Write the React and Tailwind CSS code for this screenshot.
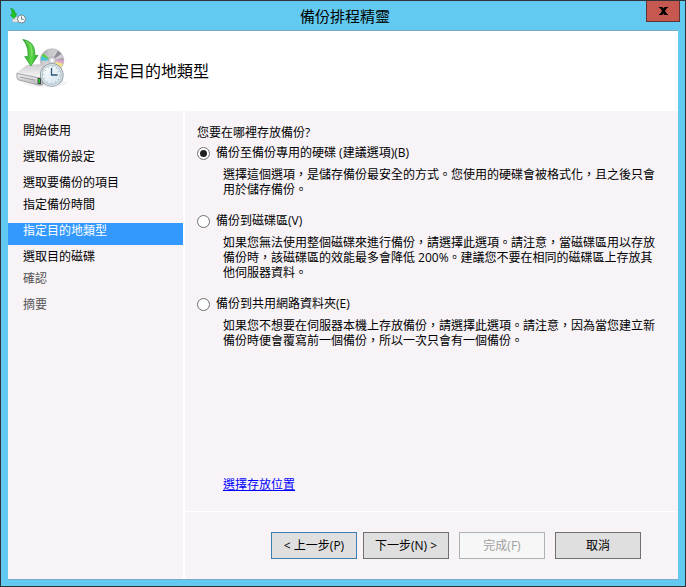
import React, { useState } from "react";

const STEPS = [
  { label: "開始使用", spacing: "mb-1" },
  { label: "選取備份設定", spacing: "mb-1" },
  { label: "選取要備份的項目", spacing: "" },
  { label: "指定備份時間", spacing: "mb-1" },
  { label: "指定目的地類型", spacing: "mb-1", current: true },
  { label: "選取目的磁碟", spacing: "" },
  { label: "確認", spacing: "mb-1", pending: true },
  { label: "摘要", spacing: "", pending: true },
];

const OPTIONS = [
  {
    id: "dedicated",
    label: "備份至備份專用的硬碟 (建議選項)(B)",
    text: "選擇這個選項，是儲存備份最安全的方式。您使用的硬碟會被格式化，且之後只會用於儲存備份。",
  },
  {
    id: "volume",
    label: "備份到磁碟區(V)",
    text: "如果您無法使用整個磁碟來進行備份，請選擇此選項。請注意，當磁碟區用以存放備份時，該磁碟區的效能最多會降低 200%。建議您不要在相同的磁碟區上存放其他伺服器資料。",
  },
  {
    id: "share",
    label: "備份到共用網路資料夾(E)",
    text: "如果您不想要在伺服器本機上存放備份，請選擇此選項。請注意，因為當您建立新備份時便會覆寫前一個備份，所以一次只會有一個備份。",
  },
];

function SmallBackupIcon() {
  return (
    <svg width="16" height="16" viewBox="0 0 16 16" aria-hidden="true">
      <path d="M2.500 10.500 4.500 9h5v5h-7z" fill="#f2f2f4" stroke="#a5a5ad" strokeWidth=".6" />
      <path d="M2.500 11.500h6" stroke="#c4c4ca" strokeWidth=".7" />
      <path d="M.6.2C3.800 1 5.300 3.200 5.300 6l1.400-.2-2.500 5L.3 7l1.500-.2C2.300 4.500 1.900 2.200.6.2z" fill="#1fc41f" stroke="#159a22" strokeWidth=".6" />
      <circle cx="11.500" cy="11" r="4" fill="#fbfdfd" stroke="#77838b" strokeWidth="1" />
      <path d="M11.500 8.500v2.800h2.300" fill="none" stroke="#3a5a70" strokeWidth=".8" />
    </svg>
  );
}

function BackupIcon() {
  return (
    <svg width="54" height="50" viewBox="0 0 54 50" aria-hidden="true">
      <defs>
        <linearGradient id="arrow" x1="0" y1="0" x2="1" y2="0">
          <stop offset="0" stopColor="#1f9a25" />
          <stop offset=".55" stopColor="#5fd84a" />
          <stop offset="1" stopColor="#2aa52c" />
        </linearGradient>
        <linearGradient id="top" x1="0" y1="0" x2="0" y2="1">
          <stop offset="0" stopColor="#cfcfd3" />
          <stop offset="1" stopColor="#fafafa" />
        </linearGradient>
        <linearGradient id="front" x1="0" y1="0" x2="0" y2="1">
          <stop offset="0" stopColor="#f6f6f7" />
          <stop offset="1" stopColor="#b2b2b6" />
        </linearGradient>
        <linearGradient id="disc" x1="0" y1="0" x2="1" y2="1">
          <stop offset="0" stopColor="#a2a2a6" />
          <stop offset=".5" stopColor="#dadade" />
          <stop offset="1" stopColor="#a0a0a5" />
        </linearGradient>
        <linearGradient id="face" x1="0" y1="0" x2="1" y2="1">
          <stop offset="0" stopColor="#ffffff" />
          <stop offset="1" stopColor="#cfe2ec" />
        </linearGradient>
      </defs>
      <ellipse cx="30" cy="45" rx="22" ry="4" fill="#f3f3f5" />
      {/* disc */}
      <circle cx="37" cy="22.500" r="11.800" fill="url(#disc)" stroke="#b0b0b4" strokeWidth=".6" />
      <path d="M37 22.500 32 12.200l5-1.300 3 .5z" fill="#c9c9cd" />
      <path d="m37 22.500 6-10 3.500 3.400z" fill="#8f8f95" />
      <path d="M37 22.500 26.500 18l-.8 4.500z" fill="#43c4dc" />
      <path d="M37 22.500 28.300 15.500 26.500 18z" fill="#58cf42" />
      <path d="M37 22.500 48.300 20l.3 2.500z" fill="#b892b0" />
      <path d="M37 22.500 48 25.500l-1.800 4.500z" fill="#f2e28a" />
      <path d="m37 22.500 11.600.5-.6 2.500z" fill="#e3a3cd" />
      <circle cx="37" cy="22.500" r="3.600" fill="#d9d9dd" stroke="#a6a6ab" strokeWidth=".6" />
      <circle cx="37" cy="22.500" r="1.400" fill="#ffffff" />
      {/* drive */}
      <path d="M1.800 35.500 12 27.200l16-.7 3 9.500-6 4.500z" fill="url(#top)" stroke="#bcbcc0" strokeWidth=".5" />
      <path d="M1.800 35.500 25 40l3-2v8.500l-3.500.8L3.200 41.800Q1.500 41 1.800 35.500z" fill="url(#front)" stroke="#85858a" strokeWidth=".7" />
      <path d="m4.500 38.600 15.500 3.200v1L5 39.600z" fill="#9a9aa0" />
      <path d="m22.600 40.200 3.400-.4v6.400l-3.400-.5z" fill="#3c443c" />
      <path d="M23.400 41h1.600v4h-1.600z" fill="#20c521" />
      {/* arrow */}
      <path d="M7.800 1.500c8.600 1.300 12.600 7 12 16l3.200-.3-7.100 10.800-6.200-9.500 3.200.2C13.700 12 11.600 5.800 7.800 1.500z" fill="url(#arrow)" stroke="#249a26" strokeWidth=".7" />
      <path d="M10.600 3.200c4.800 2.400 6.900 7.500 6.300 14.500" fill="none" stroke="#a4ee86" strokeWidth="1.200" opacity=".6" />
      {/* clock */}
      <circle cx="36.800" cy="37" r="11.800" fill="#8b99a2" />
      <circle cx="36.800" cy="37" r="10.900" fill="#dfe6ea" />
      <circle cx="36.800" cy="37" r="9.500" fill="url(#face)" stroke="#9fb3bf" strokeWidth=".7" />
      <circle cx="36.800" cy="37" r="8" fill="none" stroke="#7f9aab" strokeWidth="1" strokeDasharray=".8 3.389" />
      <path d="M36.500 30v7H42.500" fill="none" stroke="#2c5577" strokeWidth="1.300" />
    </svg>
  );
}

function WizardButton({ children, className = "border-[#707070]", ...props }) {
  return (
    <button
      type="button"
      className={`w-[86px] h-[27px] border bg-[#dfdfdf] text-center leading-4 disabled:border-[#adb2b5] disabled:bg-[#f7f7f7] disabled:text-[#a0a0a0] ${className}`}
      {...props}
    >
      {children}
    </button>
  );
}

export default function App() {
  const [selected, setSelected] = useState("dedicated");

  return (
    <div
      lang="zh-Hant"
      className="min-h-screen flex flex-col border border-[#303338] bg-[#62caf0] text-black text-xs font-['Open_Sans','Noto_Sans_CJK_TC',sans-serif]"
    >
      <header className="h-[29px] shrink-0 grid grid-cols-[1fr_auto_1fr] items-center pl-[9px] pr-[5px]">
        <SmallBackupIcon />
        <h1 className="text-[15px] leading-5">備份排程精靈</h1>
        <button
          type="button"
          aria-label="關閉"
          className="justify-self-end self-start w-[34px] h-[21px] flex items-center justify-center border border-t-0 border-[#5f3437] bg-[#c75850]"
        >
          <svg width="9" height="8" viewBox="0 0 9 8" aria-hidden="true">
            <path d="M0 0h3.500l1 1.500L5.500 0H9v1H8L6 4l2 3h1v1H5.500l-1-1.500-1 1.500H0V7h1l2-3-2-3H0z" fill="#000" />
          </svg>
        </button>
      </header>

      <div className="flex-1 flex flex-col mx-[7px] mb-1.5 border-y border-[#7aabca] bg-[#f7f3f7]">
        <div className="h-20 shrink-0 flex items-center gap-7 pl-[7px] bg-white">
          <div className="self-start pt-[7px]">
            <BackupIcon />
          </div>
          <h2 className="text-base leading-5">指定目的地類型</h2>
        </div>

        <div className="flex-1 flex">
          <nav className="w-[177px] shrink-0 border-r-2 border-white pt-3">
            <ol>
              {STEPS.map((step) => (
                <li
                  key={step.label}
                  aria-current={step.current ? "step" : undefined}
                  className={`h-[22px] pl-[15px] leading-4 ${step.spacing} ${
                    step.current
                      ? "bg-[#3399ff] text-white"
                      : step.pending
                        ? "text-[#555555]"
                        : ""
                  }`}
                >
                  {step.label}
                </li>
              ))}
            </ol>
          </nav>

          <main className="flex-1 min-w-0 flex flex-col">
            <div className="flex-1 flex flex-col pt-3.5 pl-3 pr-5 pb-[18px]">
              <fieldset>
                <legend className="leading-4 mb-1">您要在哪裡存放備份?</legend>
                <div className="flex flex-col gap-4">
                  {OPTIONS.map((option) => (
                    <div key={option.id}>
                      <label className="flex items-center gap-1.5 leading-4">
                        <input
                          type="radio"
                          name="destination"
                          value={option.id}
                          checked={selected === option.id}
                          onChange={() => setSelected(option.id)}
                          className="appearance-none grid place-content-center size-[13px] shrink-0 rounded-full border border-[#707070] bg-white checked:before:block checked:before:size-[7px] checked:before:rounded-full checked:before:bg-[#212121]"
                        />
                        {option.label}
                      </label>
                      <p className="mt-1.5 ml-[26px] leading-[15px]">{option.text}</p>
                    </div>
                  ))}
                </div>
              </fieldset>

              <a
                href="#location"
                className="mt-auto ml-[26px] self-start leading-4 text-[#0000ff] underline"
              >
                選擇存放位置
              </a>
            </div>

            <footer className="flex justify-end gap-2.5 border-t border-white py-5 pr-[37px]">
              <div className="flex gap-1.5">
                <WizardButton className="border-[#3c7fb1]">&lt; 上一步(P)</WizardButton>
                <WizardButton>下一步(N) &gt;</WizardButton>
              </div>
              <WizardButton disabled>完成(F)</WizardButton>
              <WizardButton>取消</WizardButton>
            </footer>
          </main>
        </div>
      </div>
    </div>
  );
}
